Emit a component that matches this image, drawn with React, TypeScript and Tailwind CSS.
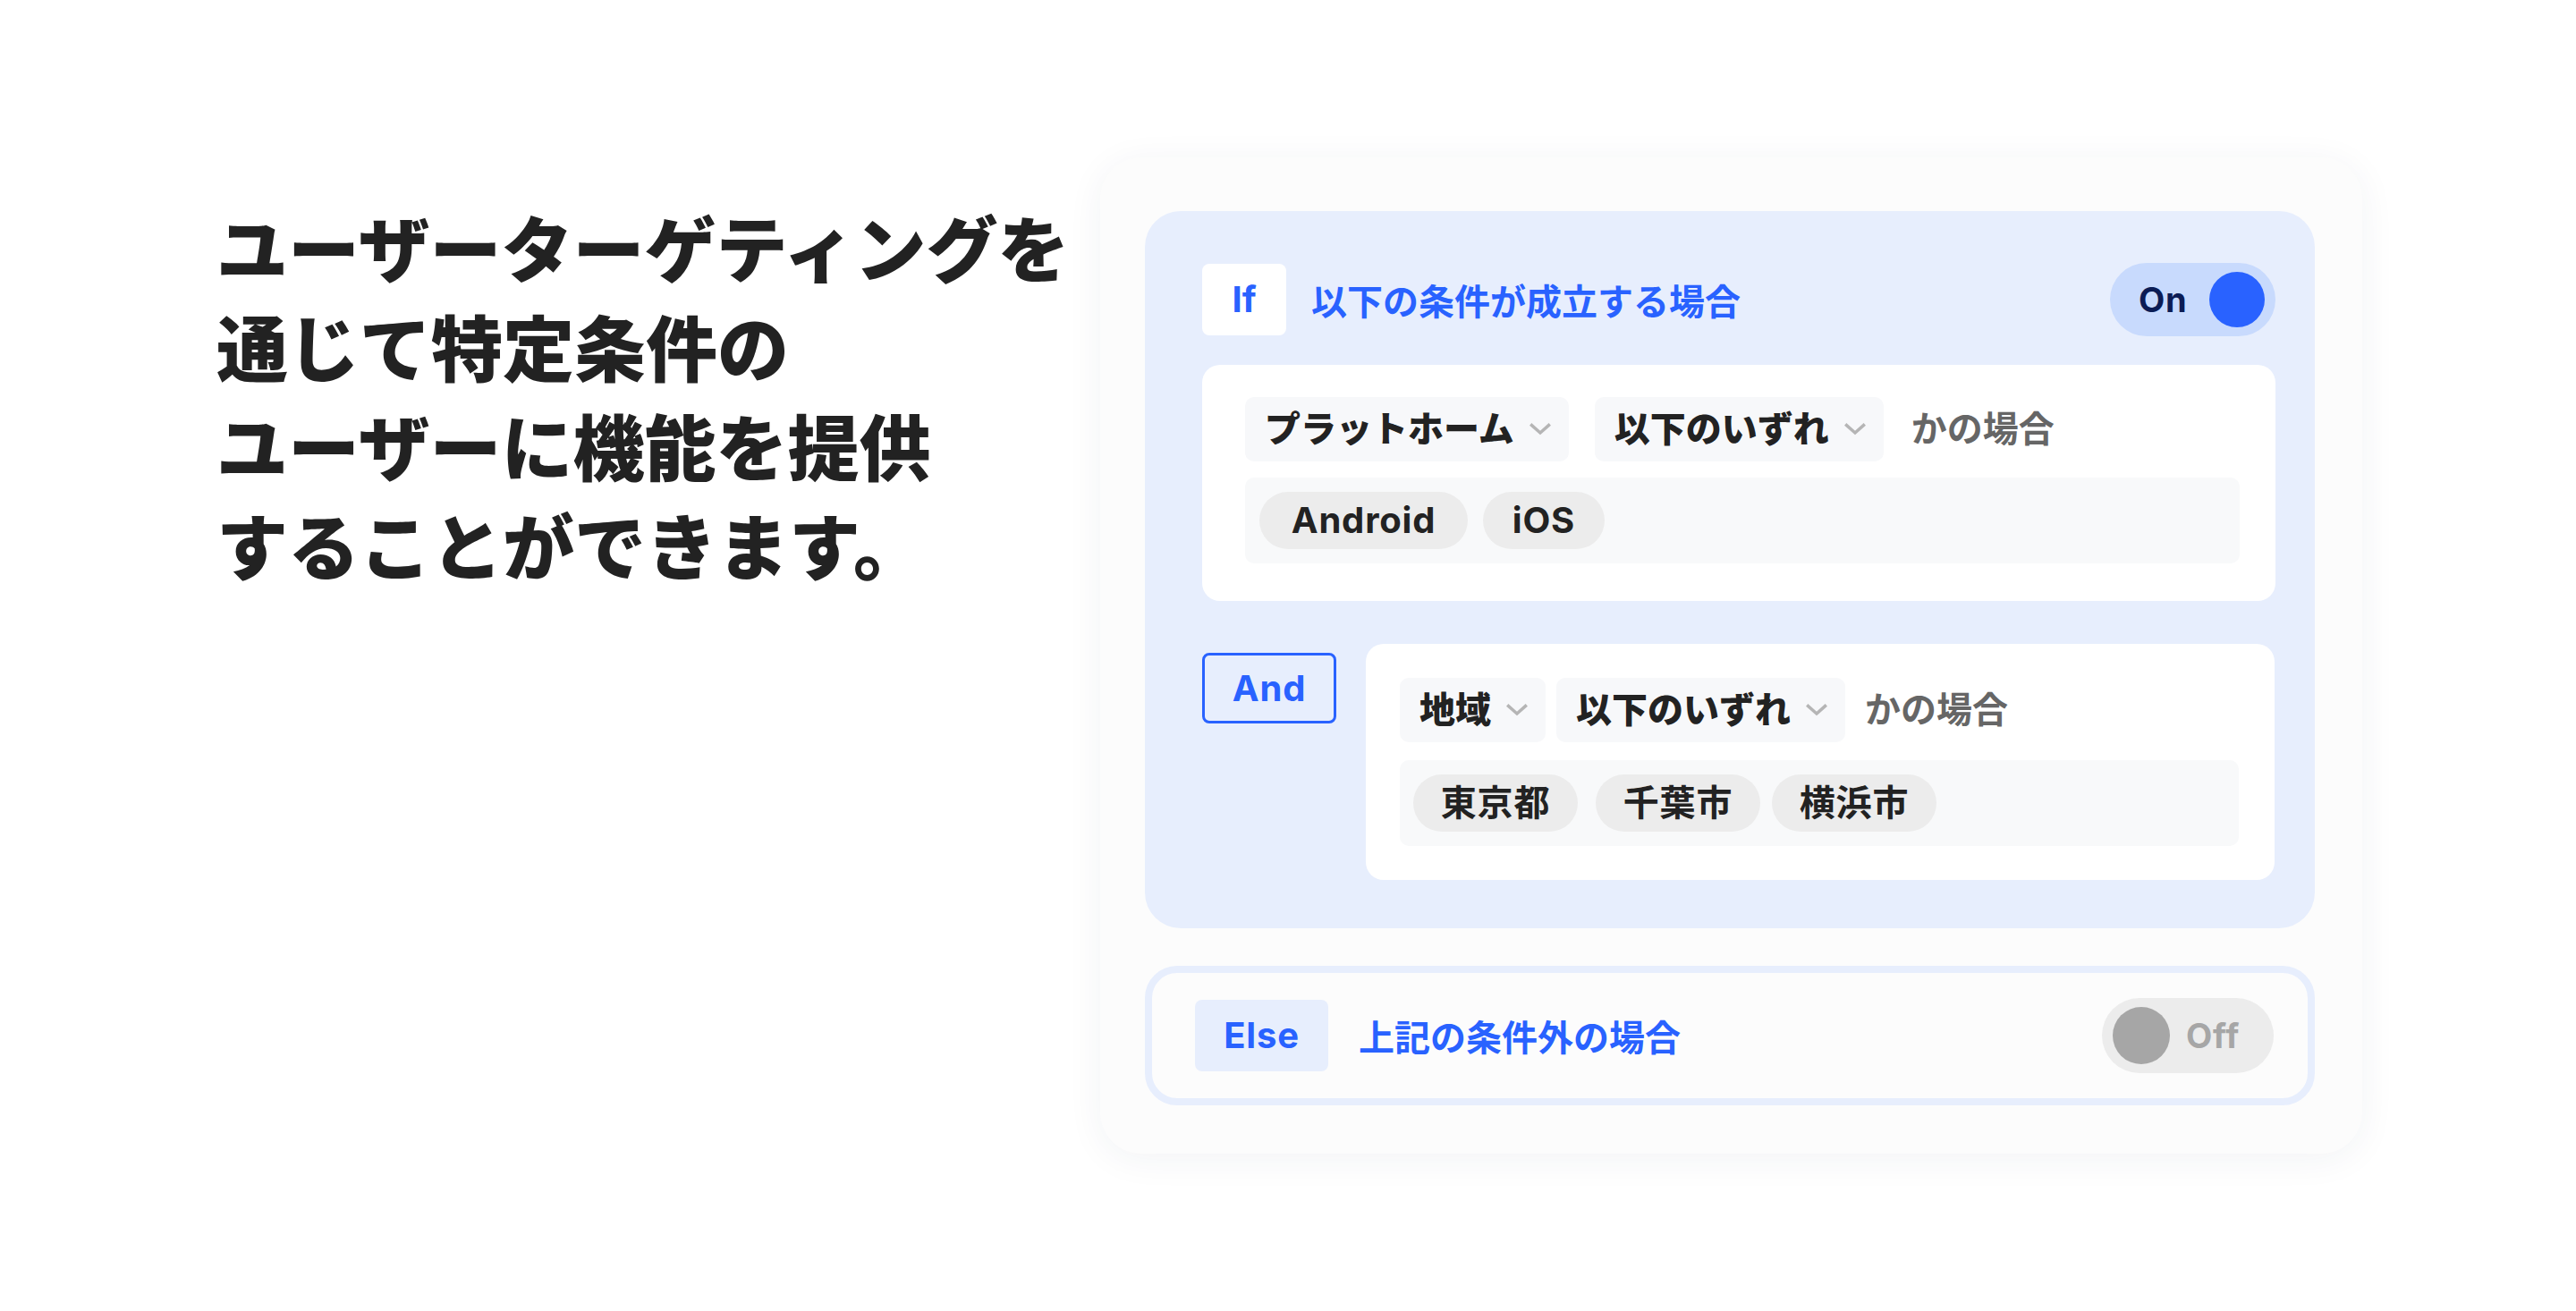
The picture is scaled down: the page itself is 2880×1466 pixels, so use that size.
import React from "react";

const Chevron = () => (
  <svg width="24" height="14" viewBox="0 0 24 14" fill="none">
    <path d="M2.5 2.5 L12 11 L21.5 2.5" stroke="#b5b5b5" strokeWidth="3.5" strokeLinecap="square" strokeLinejoin="miter" />
  </svg>
);

const Dropdown = ({ label, className = "" }: { label: string; className?: string }) => (
  <div
    className={`flex h-[72px] items-center gap-[17px] rounded-[10px] bg-[#f7f8fa] pl-[22px] pr-[20px] text-[40px] font-black leading-none text-[#222222] ${className}`}
  >
    <span>{label}</span>
    <Chevron />
  </div>
);

const Chip = ({ label, w, className = "" }: { label: string; w: string; className?: string }) => (
  <div
    className={`flex h-[64px] items-center justify-center rounded-full bg-[#ececec] text-[40px] font-bold leading-none tracking-[0.02em] text-[#222222] ${w} ${className}`}
  >
    {label}
  </div>
);

export default function App() {
  return (
    <div className="flex h-[1466px] w-[2880px] items-start bg-white font-['Inter','Noto_Sans_CJK_JP',sans-serif]">
      <div className="w-[1230px] shrink-0 whitespace-nowrap pl-[242px] pt-[219px] font-['Noto_Sans_CJK_JP',sans-serif] text-[80px] font-black leading-[111px] text-[#222222]">
        ユーザーターゲティングを
        <br />
        通じて特定条件の
        <br />
        ユーザーに機能を提供
        <br />
        することができます。
      </div>

      <div className="mt-[176px] h-[1114px] w-[1411px] shrink-0 rounded-[46px] bg-[#fcfcfc] pl-[50px] pt-[60px] shadow-[0_6px_40px_rgba(30,50,90,0.06)]">
        {/* If panel */}
        <div className="h-[802px] w-[1308px] rounded-[40px] bg-[#e7eefd] pl-[64px] pr-[44px] pt-[58px]">
          <div className="flex h-[82px] items-center justify-between">
            <div className="flex items-center">
              <div className="flex h-[80px] w-[94px] items-center justify-center rounded-[8px] bg-white text-[40px] font-bold leading-none text-[#2962ff]">
                If
              </div>
              <div className="ml-[28px] font-['Noto_Sans_CJK_JP',sans-serif] text-[40px] font-bold leading-none text-[#2962ff]">
                以下の条件が成立する場合
              </div>
            </div>
            <div className="flex h-[82px] w-[185px] items-center rounded-full bg-[#c8dafd] pl-[32px] pr-[12px]">
              <span className="text-[38px] font-bold leading-none tracking-[0.02em] text-[#0b1c55]">On</span>
              <span className="ml-auto h-[62px] w-[62px] rounded-full bg-[#2962ff]" />
            </div>
          </div>

          <div className="mt-[32px] h-[264px] w-[1200px] rounded-[20px] bg-white pl-[48px] pr-[40px] pt-[36px]">
            <div className="flex items-center">
              <Dropdown label="プラットホーム" />
              <Dropdown label="以下のいずれ" className="ml-[29px]" />
              <span className="ml-[31px] text-[40px] font-bold leading-none text-[#666666]">かの場合</span>
            </div>
            <div className="mt-[18px] flex h-[96px] items-center gap-[17px] rounded-[10px] bg-[#f8f9fa] pl-[16px]">
              <Chip label="Android" w="w-[233px]" />
              <Chip label="iOS" w="w-[136px]" />
            </div>
          </div>

          <div className="mt-[48px] flex items-start">
            <div className="mt-[10px] flex h-[79px] w-[150px] items-center justify-center rounded-[8px] border-[3px] border-[#2962ff] text-[40px] font-bold leading-none tracking-[0.02em] text-[#2962ff]">
              And
            </div>
            <div className="ml-[33px] h-[264px] w-[1016px] rounded-[20px] bg-white pl-[38px] pr-[40px] pt-[38px]">
              <div className="flex items-center">
                <Dropdown label="地域" />
                <Dropdown label="以下のいずれ" className="ml-[12px]" />
                <span className="ml-[22px] text-[40px] font-bold leading-none text-[#666666]">かの場合</span>
              </div>
              <div className="mt-[20px] flex h-[96px] items-center rounded-[10px] bg-[#f8f9fa] pl-[15px]">
                <Chip label="東京都" w="w-[184px]" />
                <Chip label="千葉市" w="w-[184px]" className="ml-[20px]" />
                <Chip label="横浜市" w="w-[184px]" className="ml-[13px]" />
              </div>
            </div>
          </div>
        </div>

        {/* Else */}
        <div className="mt-[42px] flex h-[156px] w-[1308px] items-center justify-between rounded-[36px] border-[8px] border-[#e7eefd] bg-[#fcfcfc] pl-[48px] pr-[38px]">
          <div className="flex items-center">
            <div className="flex h-[80px] w-[149px] items-center justify-center rounded-[8px] bg-[#e7eefd] text-[40px] font-bold leading-none tracking-[0.02em] text-[#2962ff]">
              Else
            </div>
            <div className="ml-[34px] font-['Noto_Sans_CJK_JP',sans-serif] text-[40px] font-bold leading-none text-[#2962ff]">
              上記の条件外の場合
            </div>
          </div>
          <div className="flex h-[84px] w-[192px] items-center rounded-full bg-[#ececec] pl-[12px]">
            <span className="h-[64px] w-[64px] rounded-full bg-[#a6a6a6]" />
            <span className="ml-[18px] text-[38px] font-bold leading-none tracking-[0.02em] text-[#a6a6a6]">Off</span>
          </div>
        </div>
      </div>
    </div>
  );
}
